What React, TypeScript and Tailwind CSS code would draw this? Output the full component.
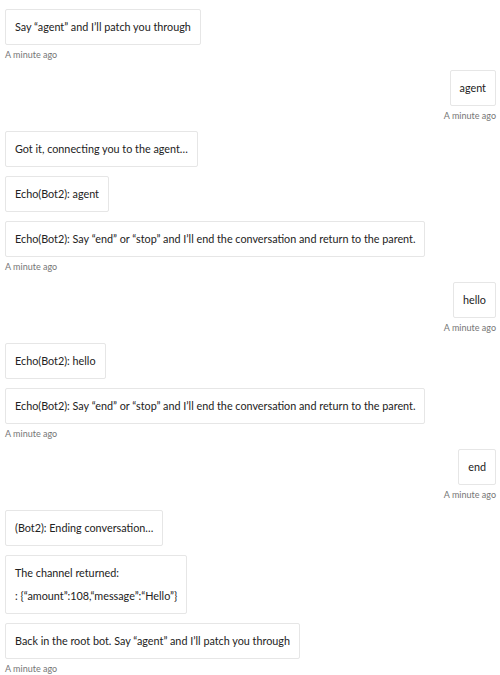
import React from "react";

type Msg = { from: "bot" | "user"; lines: string[]; time?: boolean };

const msgs: Msg[] = [
  { from: "bot", lines: ["Say “agent” and I’ll patch you through"], time: true },
  { from: "user", lines: ["agent"], time: true },
  { from: "bot", lines: ["Got it, connecting you to the agent…"] },
  { from: "bot", lines: ["Echo(Bot2): agent"] },
  { from: "bot", lines: ["Echo(Bot2): Say “end” or “stop” and I’ll end the conversation and return to the parent."], time: true },
  { from: "user", lines: ["hello"], time: true },
  { from: "bot", lines: ["Echo(Bot2): hello"] },
  { from: "bot", lines: ["Echo(Bot2): Say “end” or “stop” and I’ll end the conversation and return to the parent."], time: true },
  { from: "user", lines: ["end"], time: true },
  { from: "bot", lines: ["(Bot2): Ending conversation…"] },
  { from: "bot", lines: ["The channel returned:", ": {“amount”:108,“message”:“Hello”}"] },
  { from: "bot", lines: ["Back in the root bot. Say “agent” and I’ll patch you through"], time: true },
];

export default function App() {
  return (
    <div
      className="w-[500px] h-[675px] bg-white overflow-hidden pl-[5px] pr-[4px] pt-[9px] flex flex-col"
      style={{ fontFamily: "Lato, 'Open Sans', sans-serif" }}
    >
      {msgs.map((m, i) => (
        <div key={i} className={`flex flex-col ${m.from === "user" ? "items-end" : "items-start"} ${m.time ? "mb-[10px]" : "mb-[9px]"}`}>
          <div className="border border-[#e6e6e6] rounded-[2px] bg-white px-[9px] py-[9px] text-[10.8px] leading-[16px] text-[#222] flex flex-col gap-[7px]">
            {m.lines.map((l, j) => (
              <div key={j}>{l}</div>
            ))}
          </div>
          {m.time && (
            <div className="text-[9px] leading-[10px] text-[#767676] mt-[5px]">A minute ago</div>
          )}
        </div>
      ))}
    </div>
  );
}
